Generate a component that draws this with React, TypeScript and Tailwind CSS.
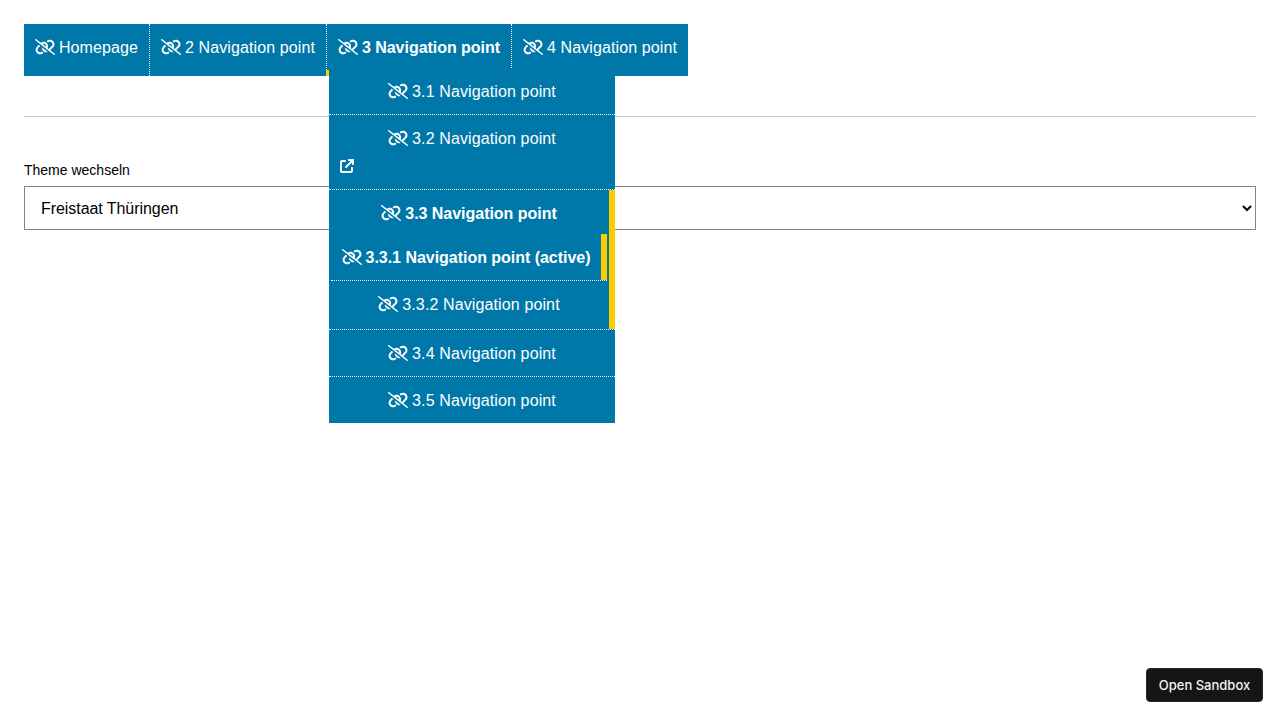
import type { ReactNode } from "react";
import { FaLinkSlash } from "react-icons/fa6";

function ExternalIcon({ className }: { className: string }) {
  return (
    <svg viewBox="0 0 448 512" fill="currentColor" className={className} aria-hidden="true">
      <path d="M256 64C256 46.33 270.3 32 288 32H416C433.7 32 448 46.33 448 64V192C448 209.7 433.7 224 416 224C398.3 224 384 209.7 384 192V141.3L214.6 310.6C202.1 323.1 181.9 323.1 169.4 310.6C156.9 298.1 156.9 277.9 169.4 265.4L338.7 96H288C270.3 96 256 81.67 256 64zM0 128C0 92.65 28.65 64 64 64H160C177.7 64 192 78.33 192 96C192 113.7 177.7 128 160 128H64V416H352V320C352 302.3 366.3 288 384 288C401.7 288 416 302.3 416 320V416C416 451.3 387.3 480 352 480H64C28.65 480 0 451.3 0 416V128z" />
    </svg>
  );
}

function NavLabel({ children, bold = false }: { children: ReactNode; bold?: boolean }) {
  return (
    <a
      href="#"
      className={`flex h-[46px] items-center justify-center gap-1 whitespace-nowrap ${bold ? "font-bold tracking-[-0.03px]" : "font-normal tracking-[0.12px]"}`}
    >
      <FaLinkSlash className="h-4 w-5 shrink-0" />
      <span className="pt-[2px]">{children}</span>
    </a>
  );
}

function Submenu() {
  return (
    <ul className="absolute top-[44px] left-[2px] z-10 w-[286px] bg-[#0077a9]">
      <li className="border-b border-dotted border-white">
        <NavLabel>3.1 Navigation point</NavLabel>
      </li>
      <li className="h-[75px] border-b border-dotted border-white">
        <NavLabel>3.2 Navigation point</NavLabel>
        <ExternalIcon className="-mt-[3px] ml-[11px] h-4 w-[14px]" />
      </li>
      <li className="flex h-[140px] border-b border-dotted border-white">
        <div className="flex-1">
          <NavLabel bold>3.3 Navigation point</NavLabel>
          <ul className="-mt-[2px] mr-[2px] ml-[2px]">
            <li className="border-b border-dotted border-white">
              <div className="flex">
                <div className="w-[270px]">
                  <NavLabel bold>3.3.1 Navigation point (active)</NavLabel>
                </div>
                <span className="w-[6px] bg-[#ffcc00]" />
              </div>
            </li>
            <li>
              <NavLabel>3.3.2 Navigation point</NavLabel>
            </li>
          </ul>
        </div>
        <span className="w-[6px] bg-[#ffcc00]" />
      </li>
      <li className="border-b border-dotted border-white">
        <NavLabel>3.4 Navigation point</NavLabel>
      </li>
      <li>
        <NavLabel>3.5 Navigation point</NavLabel>
      </li>
    </ul>
  );
}

export default function App() {
  return (
    <div className="flex h-screen flex-col bg-white px-6 pt-6 font-['Liberation_Sans',Arial,sans-serif] text-base text-black">
      <nav className="self-start text-white">
        <ul className="flex h-[52px] bg-[#0077a9]">
          <li className="w-[126px] border-r border-dotted border-white">
            <NavLabel>Homepage</NavLabel>
          </li>
          <li className="w-[177px] border-r border-dotted border-white">
            <NavLabel>2 Navigation point</NavLabel>
          </li>
          <li className="relative flex w-[185px] flex-col justify-between border-r border-dotted border-white">
            <NavLabel bold>3 Navigation point</NavLabel>
            <span className="-ml-px h-[6px] w-[3px] bg-[#ffcc00]" />
            <Submenu />
          </li>
          <li className="w-[176px]">
            <NavLabel>4 Navigation point</NavLabel>
          </li>
        </ul>
      </nav>
      <hr className="mt-10 border-t border-[#c6c6c6]" />
      <label htmlFor="theme" className="mt-[43px] text-sm leading-5">
        Theme wechseln
      </label>
      <select
        id="theme"
        className="mt-[6px] h-11 w-full border border-[#868686] bg-white pl-3 text-base tracking-[-0.06px] text-black"
      >
        <option>Freistaat Thüringen</option>
      </select>
      <button className="mt-auto mr-[-7px] mb-[18px] h-[34px] w-[117px] self-end rounded border border-[#2a2a2a] bg-[#151515] pt-[2px] font-['Inter',sans-serif] text-[13px] font-medium text-[#f2f2f2]">
        Open Sandbox
      </button>
    </div>
  );
}
